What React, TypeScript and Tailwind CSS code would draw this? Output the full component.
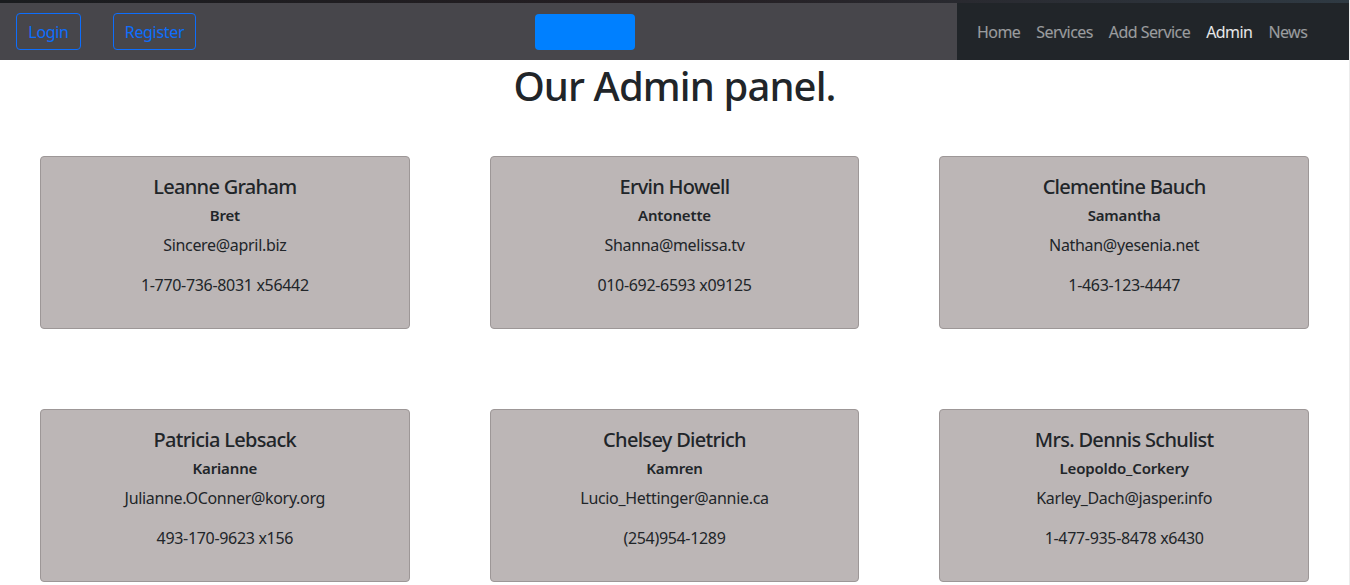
import React from "react";

type User = {
  name: string;
  username: string;
  email: string;
  phone: string;
};

const users: User[] = [
  { name: "Leanne Graham", username: "Bret", email: "Sincere@april.biz", phone: "1-770-736-8031 x56442" },
  { name: "Ervin Howell", username: "Antonette", email: "Shanna@melissa.tv", phone: "010-692-6593 x09125" },
  { name: "Clementine Bauch", username: "Samantha", email: "Nathan@yesenia.net", phone: "1-463-123-4447" },
  { name: "Patricia Lebsack", username: "Karianne", email: "Julianne.OConner@kory.org", phone: "493-170-9623 x156" },
  { name: "Chelsey Dietrich", username: "Kamren", email: "Lucio_Hettinger@annie.ca", phone: "(254)954-1289" },
  { name: "Mrs. Dennis Schulist", username: "Leopoldo_Corkery", email: "Karley_Dach@jasper.info", phone: "1-477-935-8478 x6430" },
];

const links = ["Home", "Services", "Add Service", "Admin", "News"];

function UserCard({ user }: { user: User }) {
  return (
    <div className="h-[173px] rounded-[4px] border border-[#9d9797] bg-[#bcb6b6] pt-[16px] text-center text-[#212529]">
      <h5 className="text-[20px] leading-[28px] font-medium tracking-[-0.035em]">{user.name}</h5>
      <p className="mt-[3px] text-[15px] leading-[22px] font-semibold tracking-[-0.01em]">{user.username}</p>
      <p className="mt-[8px] text-[16px] leading-[22px] tracking-[-0.02em]">{user.email}</p>
      <p className="mt-[18px] text-[16px] leading-[22px] tracking-[-0.02em]">{user.phone}</p>
    </div>
  );
}

export default function App() {
  return (
    <div className="min-h-screen bg-[#ececec] font-['Noto_Sans',sans-serif]">
      <div className="min-h-screen w-[1349px] bg-white">
        <div className="h-[3px] bg-gradient-to-r from-[#1a1c1f] via-[#241e22] to-[#2f3a43]" />
        <nav className="flex h-[57px]">
          <div className="flex flex-1 items-center bg-[#47464b] pl-[16px] tracking-[-0.02em]">
            <button className="h-[37px] w-[65px] rounded-[4px] border border-[#0d6efd] text-[16px] text-[#0d6efd]">
              Login
            </button>
            <button className="ml-[32px] h-[37px] w-[83px] rounded-[4px] border border-[#0d6efd] text-[16px] text-[#0d6efd]">
              Register
            </button>
            <button className="ml-[339px] h-[36px] w-[100px] rounded-[4px] bg-[#0080ff]" />
          </div>
          <ul className="flex w-[392px] items-center gap-[16px] bg-[#212529] pl-[20px] text-[16px] tracking-[-0.035em]">
            {links.map((link) => (
              <li
                key={link}
                className={link === "Admin" ? "text-white/90" : "text-white/55"}
              >
                {link}
              </li>
            ))}
          </ul>
        </nav>
        <h1 className="mt-[2px] text-center text-[40px] leading-[48px] font-medium tracking-[-0.022em] text-[#212529]">
          Our Admin panel.
        </h1>
        <div className="mt-[46px] grid grid-cols-3 gap-x-[80px] gap-y-[80px] px-[40px]">
          {users.map((user) => (
            <UserCard key={user.name} user={user} />
          ))}
        </div>
      </div>
    </div>
  );
}
